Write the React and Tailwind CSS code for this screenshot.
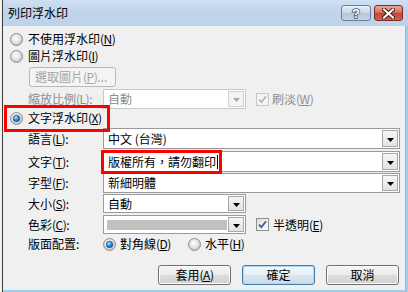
import React from 'react';

function K({ children }) {
  return (
    <span className="tracking-[-0.5px]">
      (<span className="underline underline-offset-1">{children}</span>)
    </span>
  );
}

function Radio({ checked }) {
  return (
    <svg width="13" height="13" viewBox="0 0 13 13" className="shrink-0">
      <defs>
        <radialGradient id="rbg" cx="45%" cy="40%" r="65%">
          <stop offset="0" stopColor="#ffffff" />
          <stop offset="0.55" stopColor="#e2e2e2" />
          <stop offset="1" stopColor="#b6b6b6" />
        </radialGradient>
        <radialGradient id="rdot" cx="40%" cy="35%" r="70%">
          <stop offset="0" stopColor="#bfe6ff" />
          <stop offset="0.45" stopColor="#3c95e0" />
          <stop offset="1" stopColor="#114a8f" />
        </radialGradient>
      </defs>
      <circle cx="6.5" cy="6.5" r="6" fill="url(#rbg)" stroke="#8c8e90" />
      {checked && <circle cx="6.5" cy="6.5" r="3.3" fill="url(#rdot)" stroke="#1d4f86" strokeWidth="0.6" />}
    </svg>
  );
}

function Check({ disabled }) {
  return (
    <span
      className={`w-[13px] h-[13px] shrink-0 border flex items-center justify-center ${
        disabled ? 'border-[#c6c6c6] bg-[#f4f4f4]' : 'border-[#8e8f8f] bg-[linear-gradient(135deg,#dcdcdc,#ffffff)]'
      }`}
    >
      <svg width="9" height="9" viewBox="0 0 9 9">
        <path
          d="M1 4.6 L3.4 7.2 L8 1.2"
          fill="none"
          stroke={disabled ? '#b4b4b4' : '#3a56a0'}
          strokeWidth="1.7"
        />
      </svg>
    </span>
  );
}

function Arrow({ disabled }) {
  return (
    <span
      className={`w-[16px] shrink-0 border flex items-center justify-center ${
        disabled
          ? 'border-[#d0d0d0] bg-[#f4f4f4]'
          : 'border-[#a8a8a8] bg-[linear-gradient(#f6f6f6,#e2e2e2)]'
      }`}
    >
      <svg width="7" height="4" viewBox="0 0 7 4" className="mt-[2px]">
        <polygon points="0,0 7,0 3.5,4" fill={disabled ? '#a9a9a9' : '#000000'} />
      </svg>
    </span>
  );
}

function Combo({ className, children, disabled }) {
  return (
    <div
      className={`flex items-stretch p-[1px] bg-white border ${
        disabled ? 'border-[#c8c8c8] text-[#8d8d8d]' : 'border-[#9a9a9a]'
      } ${className}`}
    >
      <div className="flex-1 flex items-center pl-[3px] whitespace-nowrap">{children}</div>
      <Arrow disabled={disabled} />
    </div>
  );
}

function Btn({ children, def }) {
  return (
    <div
      className={`w-[73px] h-[20px] rounded-[3px] border flex items-center justify-center ${
        def
          ? 'border-[#3c7fb1] bg-[linear-gradient(#f3f8fb,#e7f0f6_50%,#d7e5ee_50%,#cddde8)] shadow-[inset_0_0_0_1px_#a7d8f5]'
          : 'border-[#707070] bg-[linear-gradient(#f4f4f4,#ebebeb_50%,#dddddd_50%,#d2d2d2)] shadow-[inset_0_0_0_1px_#fcfcfc]'
      }`}
    >
      {children}
    </div>
  );
}

function Field({ label, children, className }) {
  return (
    <div className={`flex items-center pl-[25px] ${className}`}>
      <span className="w-[75px] shrink-0">{label}</span>
      {children}
    </div>
  );
}

export default function App() {
  return (
    <div className="relative w-[408px] h-[292px] flex overflow-hidden text-[12px] leading-none text-black font-['Noto_Sans_CJK_TC','Noto_Sans',sans-serif]">
      <div className="w-[2px] bg-[#f2f2f2]" />
      <div className="w-[1px] bg-[#3a3a3a]" />
      <div className="flex-1 flex flex-col bg-[#9fcfee]">
        <div className="h-[26px] flex items-center bg-[linear-gradient(#cfe0f3,#c1d5ed_40%,#bcd2eb)]">
          <span className="pl-[5px] flex-1">列印浮水印</span>
          <div className="flex gap-[3px] pr-[5px] self-start mt-[5px]">
            <div className="w-[30px] h-[16px] rounded-[3px] border border-[#6d7f95] bg-[linear-gradient(#e6eef7,#c8d6e6_50%,#b3c5da_50%,#c4d4e6)] flex items-center justify-center">
              <svg width="12" height="14" viewBox="0 0 12 14">
                <text x="6" y="12" textAnchor="middle" fontSize="13" fontWeight="bold" fontFamily="Liberation Sans, sans-serif" fill="#ffffff" stroke="#45526a" strokeWidth="1.6" paintOrder="stroke">?</text>
              </svg>
            </div>
            <div className="w-[29px] h-[16px] rounded-[3px] border border-[#7a2c22] bg-[linear-gradient(#e9a596,#d9735f_45%,#c74432_50%,#d0604b)] flex items-center justify-center">
              <svg width="13" height="11" viewBox="0 0 13 11">
                <path d="M2 1.5 L11 9.5 M11 1.5 L2 9.5" stroke="#4a1c16" strokeWidth="4" strokeLinecap="square" />
                <path d="M2 1.5 L11 9.5 M11 1.5 L2 9.5" stroke="#ffffff" strokeWidth="2" strokeLinecap="square" />
              </svg>
            </div>
          </div>
        </div>
        <div className="flex-1 flex">
          <div className="flex-1 flex flex-col bg-[#f0f0f0] border-r border-[#a9b6c4] pt-[4px]">
            <div className="h-[18px] flex items-center pl-[7px] gap-[5px]">
              <Radio />
              <span>不使用浮水印<K>N</K></span>
            </div>
            <div className="h-[16px] flex items-center pl-[7px] gap-[5px]">
              <Radio />
              <span>圖片浮水印<K>I</K></span>
            </div>
            <div className="mt-[3px] ml-[26px] w-[87px] h-[20px] rounded-[3px] border border-[#b5b9bc] bg-[#f4f4f4] text-[#a3a3a3] flex items-center pl-[5px]">
              選取圖片<K>P</K>...
            </div>
            <div className="mt-[2px] h-[20px] flex items-center pl-[25px] text-[#8d8d8d]">
              <span className="w-[75px] shrink-0">縮放比例<K>L</K>:</span>
              <Combo disabled className="w-[143px] h-[20px]">自動</Combo>
              <div className="ml-[10px] flex items-center gap-[3px]">
                <Check disabled />
                <span>刷淡<K>W</K></span>
              </div>
            </div>
            <div className="h-[18px] flex items-center pl-[7px] gap-[5px]">
              <Radio checked />
              <span>文字浮水印<K>X</K></span>
            </div>
            <Field label={<>語言<K>L</K>:</>} className="mt-[1px] h-[21px]">
              <Combo className="w-[297px] h-[21px]">中文 (台灣)</Combo>
            </Field>
            <Field label={<>文字<K>T</K>:</>} className="mt-[2px] h-[21px]">
              <Combo className="w-[297px] h-[21px]">
                版權所有，請勿翻印
                <span className="w-[1px] h-[14px] bg-black ml-[1px]" />
              </Combo>
            </Field>
            <Field label={<>字型<K>F</K>:</>} className="mt-[1px] h-[20px]">
              <Combo className="w-[297px] h-[20px]">新細明體</Combo>
            </Field>
            <Field label={<>大小<K>S</K>:</>} className="mt-[1px] h-[19px]">
              <Combo className="w-[143px] h-[19px]">自動</Combo>
            </Field>
            <Field label={<>色彩<K>C</K>:</>} className="mt-[2px] h-[19px]">
              <Combo className="w-[143px] h-[19px]">
                <span className="w-[120px] h-[10px] bg-[#c0c0c0] -ml-[1px]" />
              </Combo>
              <div className="ml-[10px] flex items-center gap-[4px]">
                <Check />
                <span>半透明<K>E</K></span>
              </div>
            </Field>
            <Field label="版面配置:" className="h-[20px]">
              <div className="flex items-center gap-[4px]">
                <Radio checked />
                <span>對角線<K>D</K></span>
              </div>
              <div className="ml-[17px] flex items-center gap-[4px]">
                <Radio />
                <span>水平<K>H</K></span>
              </div>
            </Field>
            <div className="mt-[11px] flex justify-end gap-[11px] pr-[6px]">
              <Btn>套用<K>A</K></Btn>
              <Btn def>確定</Btn>
              <Btn>取消</Btn>
            </div>
          </div>
          <div className="w-[2px]" />
        </div>
        <div className="h-[2px]" />
      </div>

      <div className="absolute left-[4px] top-[105px] w-[106px] h-[27px] border-[3px] border-[#ff0000]" />
      <div className="absolute left-[101px] top-[150px] w-[121px] h-[24px] border-[3px] border-[#ff0000]" />
    </div>
  );
}
